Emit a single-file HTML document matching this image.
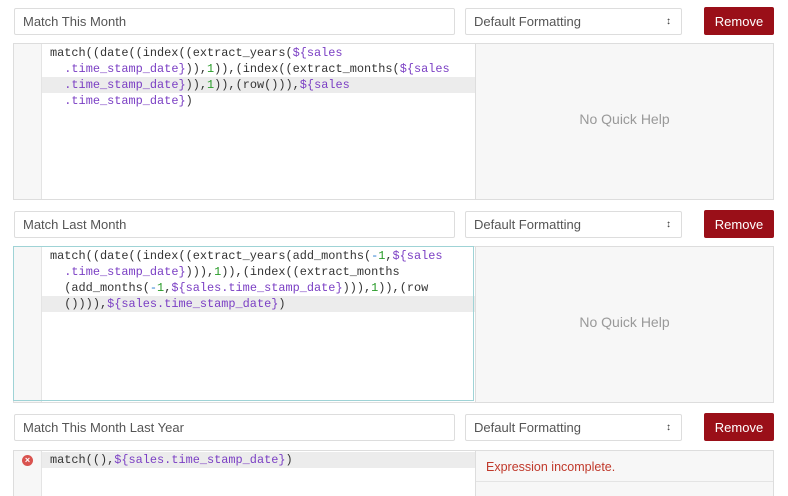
<!DOCTYPE html>
<html><head><style>
html,body{margin:0;width:788px;height:496px;overflow:hidden}
body{background:#fff;font-family:"Liberation Sans",sans-serif;position:relative}
.in{position:absolute;left:14px;border:1px solid #ddd;border-radius:2px;font-size:13px;color:#555;line-height:25px;padding-left:8px;box-sizing:border-box;width:441px;height:27px}
.sel{position:absolute;left:465px;width:217px;height:27px;border:1px solid #ddd;border-radius:2px;font-size:13px;color:#555;line-height:25px;padding-left:8px;box-sizing:border-box}
.sel span{position:absolute;right:10px;top:0;font-size:10px;color:#333}
.btn{position:absolute;left:704px;width:70px;height:28px;background:#9a0f18;color:#fff;border-radius:2px;font-size:13px;text-align:center;line-height:30px}
.ed{position:absolute;left:13px;width:761px;border:1px solid #ddd;box-sizing:border-box;background:#fff}
.gut{position:absolute;left:0;top:0;bottom:0;width:27px;background:#f7f7f7;border-right:1px solid #e4e4e4}
.help{position:absolute;left:461px;right:0;top:0;bottom:0;background:#f7f7f7;border-left:1px solid #ddd;color:#999;font-size:14px;text-align:center}
.code{position:absolute;left:28px;top:0;width:433px;font-family:"Liberation Mono",monospace;font-size:11.9px;color:#333}
.ln{height:16px;line-height:16px;padding-left:8px;white-space:pre}
.hl{background:#ececec}
.v{color:#7b3fc4}.n{color:#2a9c2a}.m{color:#2a7fd0}
</style></head><body>
<div class="in" style="top:8px">Match This Month</div>
<div class="sel" style="top:8px">Default Formatting<span>&#x2195;</span></div>
<div class="btn" style="top:7px">Remove</div>
<div class="ed" style="top:43px;height:157px">
<div class="gut"></div>
<div class="code" style="top:1px">
<div class="ln">match((date((index((extract_years(<span class="v">${sales</span></div>
<div class="ln">  <span class="v">.time_stamp_date}</span>)),<span class="n">1</span>)),(index((extract_months(<span class="v">${sales</span></div>
<div class="ln hl">  <span class="v">.time_stamp_date}</span>)),<span class="n">1</span>)),(row())),<span class="v">${sales</span></div>
<div class="ln">  <span class="v">.time_stamp_date}</span>)</div>
</div>
<div class="help"><div style="margin-top:67px">No Quick Help</div></div>
</div>

<div class="in" style="top:211px">Match Last Month</div>
<div class="sel" style="top:211px">Default Formatting<span>&#x2195;</span></div>
<div class="btn" style="top:210px">Remove</div>
<div class="ed" style="top:246px;height:157px">
<div class="gut"></div>
<div class="code" style="top:1px">
<div class="ln">match((date((index((extract_years(add_months(<span class="m">-</span><span class="n">1</span>,<span class="v">${sales</span></div>
<div class="ln">  <span class="v">.time_stamp_date}</span>))),<span class="n">1</span>)),(index((extract_months</div>
<div class="ln">  (add_months(<span class="m">-</span><span class="n">1</span>,<span class="v">${sales.time_stamp_date}</span>))),<span class="n">1</span>)),(row</div>
<div class="ln hl">  ()))),<span class="v">${sales.time_stamp_date}</span>)</div>
</div>
<div style="position:absolute;left:0;top:0;width:461px;height:155px;border:1px solid #9fd3d6;box-sizing:border-box;margin:-1px"></div>
<div class="help"><div style="margin-top:67px">No Quick Help</div></div>
</div>

<div class="in" style="top:414px">Match This Month Last Year</div>
<div class="sel" style="top:414px">Default Formatting<span>&#x2195;</span></div>
<div class="btn" style="top:413px">Remove</div>
<div class="ed" style="top:450px;height:46px;border-bottom:none">
<div class="gut"></div>
<div class="code" style="top:1px">
<div class="ln hl">match((),<span class="v">${sales.time_stamp_date}</span>)</div>
</div>
<div style="position:absolute;left:8px;top:4px;width:11px;height:11px;border-radius:50%;background:#d9534f;color:#fff;font-size:9px;line-height:11px;text-align:center;font-weight:bold">×</div>
<div class="help" style="text-align:left;background:#f7f7f7"><div style="color:#c0392b;font-size:12.5px;padding:9px 0 0 10px;height:21px;border-bottom:1px solid #e4e4e4">Expression incomplete.</div></div>
</div>
</body></html>
